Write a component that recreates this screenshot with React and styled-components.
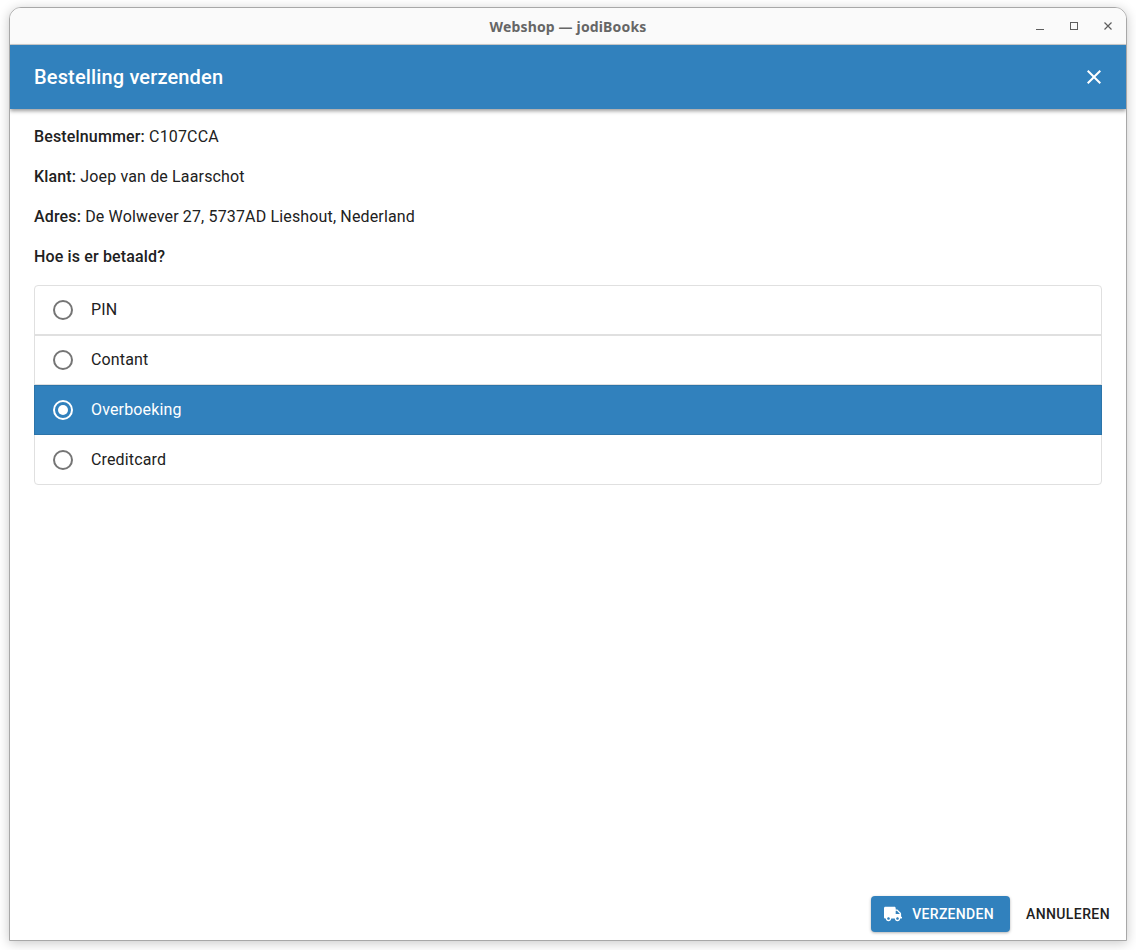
import React from 'react';
import styled, { createGlobalStyle } from 'styled-components';
import { FaTruck } from 'react-icons/fa';

const options = ['PIN', 'Contant', 'Overboeking', 'Creditcard'];

function App() {
    return (
        <>
            <GlobalStyle />
            <Desktop>
                <Window>
                    <TitleBar>
                        <WindowTitle>Webshop — jodiBooks</WindowTitle>
                        <WindowControls>
                            <WindowButton>
                                <svg width="10" height="10" viewBox="0 0 10 10">
                                    <path d="M1 8.5h8" stroke="#5e5e5e" strokeWidth="1" />
                                </svg>
                            </WindowButton>
                            <WindowButton>
                                <svg width="10" height="10" viewBox="0 0 10 10">
                                    <rect x="1.5" y="1.5" width="7" height="7" fill="none" stroke="#5e5e5e" strokeWidth="1" />
                                </svg>
                            </WindowButton>
                            <WindowButton>
                                <svg width="10" height="10" viewBox="0 0 10 10">
                                    <path d="M1.5 1.5l7 7M8.5 1.5l-7 7" stroke="#5e5e5e" strokeWidth="1.2" />
                                </svg>
                            </WindowButton>
                        </WindowControls>
                    </TitleBar>

                    <Header>
                        <HeaderTitle>Bestelling verzenden</HeaderTitle>
                        <CloseButton>
                            <svg width="24" height="24" viewBox="0 0 24 24" fill="currentColor">
                                <path d="M19 6.41L17.59 5 12 10.59 6.41 5 5 6.41 10.59 12 5 17.59 6.41 19 12 13.41 17.59 19 19 17.59 13.41 12z" />
                            </svg>
                        </CloseButton>
                    </Header>

                    <Content>
                        <InfoLine><strong>Bestelnummer:</strong> C107CCA</InfoLine>
                        <InfoLine><strong>Klant:</strong> Joep van de Laarschot</InfoLine>
                        <InfoLine><strong>Adres:</strong> De Wolwever 27, 5737AD Lieshout, Nederland</InfoLine>
                        <InfoLine><strong>Hoe is er betaald?</strong></InfoLine>

                        <OptionList>
                            {options.map((option) => (
                                <OptionRow key={option} $active={option === 'Overboeking'}>
                                    <Radio $active={option === 'Overboeking'} />
                                    <OptionLabel>{option}</OptionLabel>
                                </OptionRow>
                            ))}
                        </OptionList>
                    </Content>

                    <Footer>
                        <SendButton>
                            <FaTruck size={18} />
                            Verzenden
                        </SendButton>
                        <CancelButton>Annuleren</CancelButton>
                    </Footer>
                </Window>
            </Desktop>
        </>
    );
}

export default App;

const GlobalStyle = createGlobalStyle`
    html, body {
        margin: 0;
        padding: 0;
        background: #ffffff;
    }

    * {
        box-sizing: border-box;
    }
`;

const Desktop = styled.div`
    width: 1136px;
    height: 950px;
    padding: 7px 9px 9px 9px;
    overflow: hidden;
    font-family: Roboto, "Liberation Sans", sans-serif;
`;

const Window = styled.div`
    display: flex;
    flex-direction: column;
    height: 934px;
    background: #ffffff;
    border: 1px solid #a8a8a8;
    border-radius: 12px 12px 0 0;
    box-shadow: 0 2px 12px rgba(0, 0, 0, 0.22);
    overflow: hidden;
`;

const TitleBar = styled.div`
    position: relative;
    display: flex;
    align-items: center;
    justify-content: center;
    flex: 0 0 37px;
    background: #fafafa;
    border-bottom: 1px solid #cfcfcf;
`;

const WindowTitle = styled.div`
    font-family: "Noto Sans", "Open Sans", sans-serif;
    font-size: 14px;
    font-weight: 700;
    letter-spacing: 0.15px;
    color: #666666;
`;

const WindowControls = styled.div`
    position: absolute;
    top: 0;
    right: 6px;
    bottom: 0;
    display: flex;
    align-items: center;
    gap: 10px;
`;

const WindowButton = styled.div`
    display: flex;
    align-items: center;
    justify-content: center;
    width: 24px;
    height: 24px;
`;

const Header = styled.div`
    position: relative;
    display: flex;
    align-items: center;
    justify-content: space-between;
    flex: 0 0 64px;
    padding: 0 20px 0 24px;
    background: #3181bd;
    color: #ffffff;
    box-shadow: 0 2px 4px rgba(0, 0, 0, 0.4);
`;

const HeaderTitle = styled.div`
    font-size: 20px;
    font-weight: 500;
    letter-spacing: 0.15px;
`;

const CloseButton = styled.div`
    display: flex;
    width: 24px;
    height: 24px;
`;

const Content = styled.div`
    flex: 1;
    padding: 16px 24px 0 24px;
`;

const InfoLine = styled.div`
    height: 24px;
    margin-bottom: 16px;
    font-size: 16px;
    line-height: 24px;
    letter-spacing: 0.15px;
    color: #212121;

    strong {
        font-weight: 500;
    }
`;

const OptionList = styled.div`
    display: flex;
    flex-direction: column;
    height: 200px;
    margin-top: 5px;
    border: 1px solid #e0e0e0;
    border-radius: 4px;
`;

const OptionRow = styled.div`
    display: flex;
    align-items: center;
    gap: 18px;
    flex: 0 0 ${(p) => (p.$active ? '50px' : '49px')};
    margin: ${(p) => (p.$active ? '0 -1px' : '0')};
    padding-left: 18px;
    font-size: 16px;
    letter-spacing: 0.15px;
    color: ${(p) => (p.$active ? '#ffffff' : '#212121')};
    background: ${(p) => (p.$active ? '#3181bd' : 'transparent')};
    border: ${(p) => (p.$active ? '1px solid #2c74a9' : '0')};
    border-bottom: 1px solid ${(p) => (p.$active ? '#2c74a9' : '#e0e0e0')};

    &:first-child {
        flex-basis: 50px;
        border-bottom-width: 2px;
    }

    &:last-child {
        padding-top: 1px;
        border-bottom: 0;
    }
`;

const OptionLabel = styled.span`
    line-height: 24px;
    margin-bottom: 1px;
`;

const Radio = styled.span`
    position: relative;
    flex: 0 0 20px;
    width: 20px;
    height: 20px;
    border: 2px solid ${(p) => (p.$active ? '#ffffff' : '#757575')};
    border-radius: 50%;

    &::after {
        content: '';
        display: ${(p) => (p.$active ? 'block' : 'none')};
        position: absolute;
        top: 3px;
        left: 3px;
        width: 10px;
        height: 10px;
        border-radius: 50%;
        background: #ffffff;
    }
`;

const Footer = styled.div`
    display: flex;
    align-items: center;
    justify-content: flex-end;
    padding: 0 0 8px 0;
`;

const SendButton = styled.div`
    display: flex;
    align-items: center;
    gap: 10px;
    height: 36px;
    padding: 0 16px 0 13px;
    background: #3181bd;
    color: #ffffff;
    font-size: 14px;
    font-weight: 500;
    letter-spacing: 0.3px;
    text-transform: uppercase;
    border-radius: 4px;
    box-shadow: 0 1px 3px rgba(0, 0, 0, 0.3);
`;

const CancelButton = styled.div`
    display: flex;
    align-items: center;
    height: 36px;
    padding: 0 16px;
    color: #212121;
    font-size: 14px;
    font-weight: 500;
    letter-spacing: 0.4px;
    text-transform: uppercase;
`;
